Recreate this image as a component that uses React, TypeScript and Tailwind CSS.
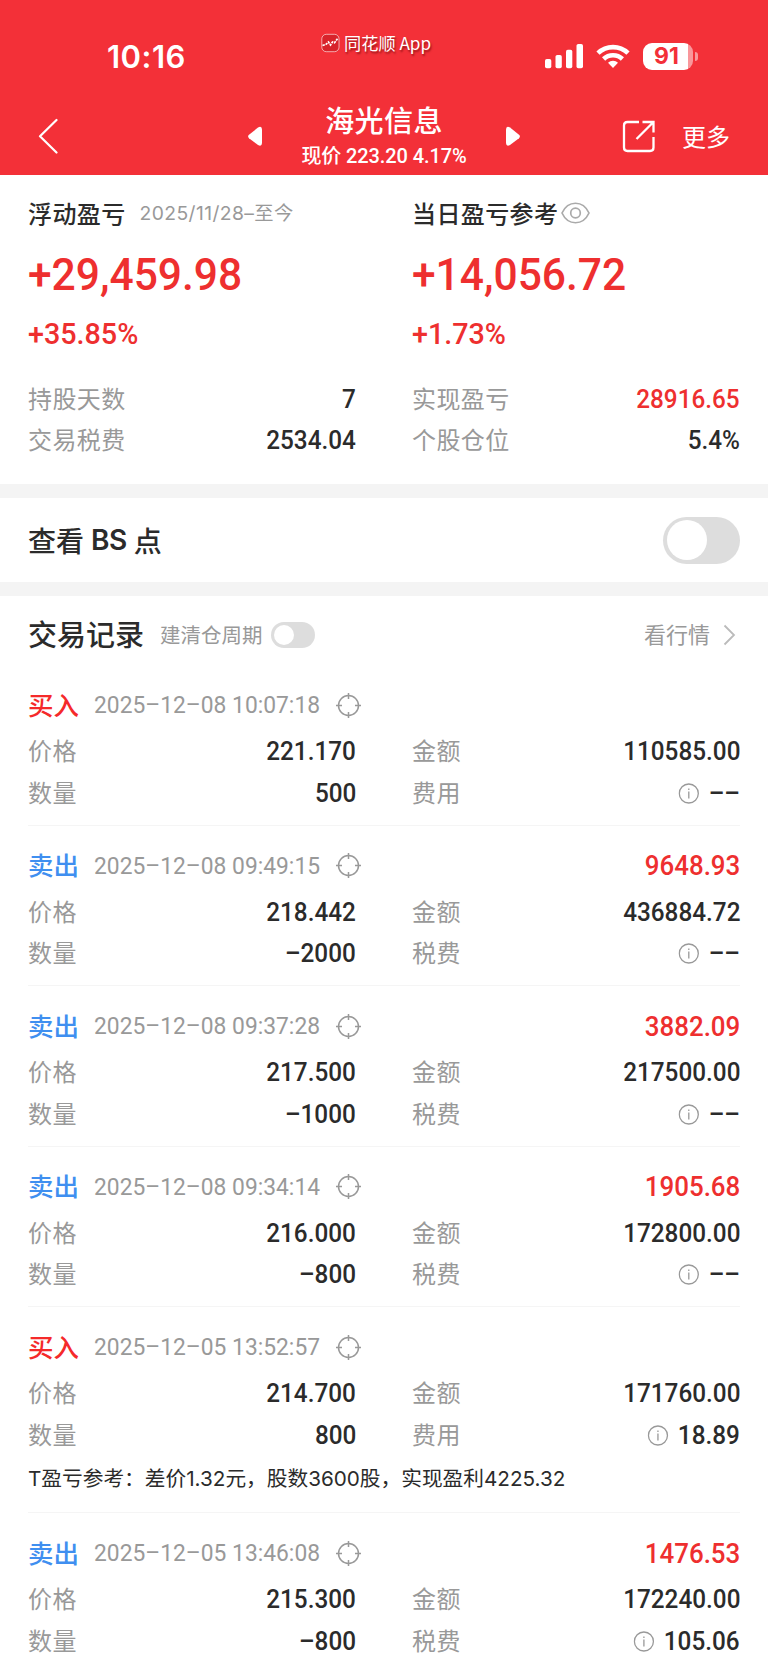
import { ReactNode } from "react";
import clsx from "clsx";

interface TradeRecord {
  side: "买入" | "卖出";
  time: string;
  profit?: string;
  price: string;
  amount: string;
  quantity: string;
  fee: string;
  note?: string;
}

const records: TradeRecord[] = [
  { side: "买入", time: "2025–12–08 10:07:18", price: "221.170", amount: "110585.00", quantity: "500", fee: "––" },
  { side: "卖出", time: "2025–12–08 09:49:15", profit: "9648.93", price: "218.442", amount: "436884.72", quantity: "–2000", fee: "––" },
  { side: "卖出", time: "2025–12–08 09:37:28", profit: "3882.09", price: "217.500", amount: "217500.00", quantity: "–1000", fee: "––" },
  { side: "卖出", time: "2025–12–08 09:34:14", profit: "1905.68", price: "216.000", amount: "172800.00", quantity: "–800", fee: "––" },
  {
    side: "买入",
    time: "2025–12–05 13:52:57",
    price: "214.700",
    amount: "171760.00",
    quantity: "800",
    fee: "18.89",
    note: "T盈亏参考：差价1.32元，股数3600股，实现盈利4225.32",
  },
  { side: "卖出", time: "2025–12–05 13:46:08", profit: "1476.53", price: "215.300", amount: "172240.00", quantity: "–800", fee: "105.06" },
];

function StatusBar() {
  return (
    <div className="flex h-[98px] items-start">
      <div className="ml-[107px] mt-[39px] w-[214px] font-['Inter'] text-[31px] font-semibold leading-[36px] tracking-[0.5px]">
        10:16
      </div>
      <div className="mt-[31px] flex w-[224px] items-center gap-[4px]">
        <svg width="19" height="20" viewBox="0 0 19 20" fill="none">
          <rect x="0.8" y="1.3" width="17.2" height="17.4" rx="4.5" fill="#d8232b" stroke="#fff" strokeOpacity="0.6" />
          <path d="M1.500 12.500l3.500-1.200L7.500 9l2 3 2-3 2 .8 3-4" stroke="#fff" strokeWidth="1.7" strokeDasharray="2.4 0.8" />
        </svg>
        <span className="text-[17.2px] leading-[24px] [text-shadow:1px_2px_2px_rgba(90,0,0,0.6)]">同花顺 App</span>
      </div>
      <svg className="mt-[43px]" width="39" height="26" viewBox="0 0 39 26" fill="#fff">
        <rect x="0" y="16" width="6.3" height="9.3" rx="1.8" />
        <rect x="10.5" y="12" width="6.3" height="13.3" rx="1.8" />
        <rect x="21" y="6.7" width="6.3" height="18.6" rx="1.8" />
        <rect x="31.5" y="1" width="6.5" height="24.3" rx="1.8" />
      </svg>
      <svg className="ml-[12px] mt-[43px]" width="34" height="26" viewBox="0 0 34 26" fill="none" stroke="#fff" strokeWidth="4.6">
        <path d="M2 10.2a21.5 21.5 0 0 1 30 0" />
        <path d="M7.6 16a13.5 13.5 0 0 1 18.8 0" />
        <path d="M17 25l-5-5.2a7.2 7.2 0 0 1 10 0z" fill="#fff" stroke="none" />
      </svg>
      <div className="ml-[13px] mt-[43px] flex h-[27px] items-center">
        <div className="flex h-[27px] w-[50px] rounded-[9px] bg-[linear-gradient(90deg,#fff_45px,#f9979b_45px)] pl-[11px] font-['Inter'] text-[23px] font-bold leading-[27px] text-[#f33038]">
          91
        </div>
        <div className="ml-[2px] h-[9px] w-[3px] rounded-r-full bg-[#f9979b]" />
      </div>
    </div>
  );
}

function NavBar() {
  return (
    <div className="flex h-[77px] items-start">
      <svg className="ml-[38px] mt-[20px]" width="21" height="36" viewBox="0 0 21 36" fill="none" stroke="#fff" strokeWidth="2.2" strokeLinecap="round" strokeLinejoin="round">
        <path d="M18.500 2L2 18.200 18.500 34.500" />
      </svg>
      <svg className="ml-[189px] mt-[28px]" width="15" height="21" viewBox="0 0 15 21" fill="#fff">
        <path d="M1 8.800L10 1.600Q13.800-.6 14 3.500V17Q13.800 21 10 19L1 12.200Q-.8 10.500 1 8.800Z" />
      </svg>
      <div className="flex w-[242px] flex-col items-center">
        <div className="mt-[3px] text-[29px] font-medium leading-[36px] tracking-[0.4px]">海光信息</div>
        <div className="mt-[6px] font-['Roboto','Noto_Sans_CJK_SC',sans-serif] text-[20px] font-medium leading-[26px] tracking-[-0.1px]">
          现价 223.20 4.17%
        </div>
      </div>
      <svg className="mt-[28px]" width="15" height="21" viewBox="0 0 15 21" fill="#fff">
        <path d="M14 8.800L5 1.600Q1.200-.6 1 3.500V17Q1.200 21 5 19L14 12.200Q15.800 10.500 14 8.800Z" />
      </svg>
      <svg className="ml-[102px] mt-[22px]" width="34" height="34" viewBox="0 0 34 34" fill="none" stroke="#fff" strokeWidth="2.3">
        <path d="M17 2H5.500Q2 2 2 5.500V27.500Q2 31 5.500 31H28Q31.500 31 31.500 27.500V17" />
        <path d="M20.500 2H31.500V12.500M31.500 2L14.500 19" />
      </svg>
      <div className="ml-[26px] mt-[21px] text-[24px] leading-[34px]">更多</div>
    </div>
  );
}

function Toggle({ small }: { small?: boolean }) {
  return (
    <div className={clsx("flex items-center rounded-full bg-[#ddd]", small ? "h-[26px] w-[44px] pl-[3px]" : "h-[47px] w-[77px] pl-[4px]")}>
      <div className={clsx("rounded-full bg-white", small ? "size-5" : "size-10")} />
    </div>
  );
}

function TargetIcon() {
  return (
    <svg width="25" height="25" viewBox="0 0 25 25" fill="none" stroke="#999" strokeWidth="1.5">
      <circle cx="12.500" cy="12.500" r="10" />
      <path d="M12.500 0V6M12.500 19V25M0 12.500H6M19 12.500H25" />
    </svg>
  );
}

// a little wider than tall, the value column is condensed horizontally
function InfoIcon() {
  return (
    <svg width="22.5" height="21" viewBox="0 0 21 21" preserveAspectRatio="none" fill="none" stroke="#999" strokeWidth="1.3">
      <circle cx="10.500" cy="10.500" r="9.500" />
      <path d="M10.500 8.500V15.500M10.500 5.500V7" />
    </svg>
  );
}

function Field({ label, children, red }: { label: string; children: ReactNode; red?: boolean }) {
  return (
    <div className="flex h-[41.5px] items-center justify-between">
      <span className="pb-[2px] text-[24px] tracking-[0.4px] text-[#999]">{label}</span>
      <span
        className={clsx(
          "flex origin-right scale-x-[0.935] items-center pt-px font-['Roboto'] text-[26px] font-medium",
          red ? "text-[#ee2f2f]" : "text-[#2b2b2b]"
        )}
      >
        {children}
      </span>
    </div>
  );
}

function Summary({ title, total, percent, children }: { title: ReactNode; total: string; percent: string; children: ReactNode }) {
  return (
    <div>
      <div className="flex h-[77px] items-center pb-[2px] text-[24px] font-medium tracking-[0.4px] text-[#2b2b2b]">{title}</div>
      <div className="h-[43px] origin-left scale-x-[0.945] font-['Roboto'] text-[45px] font-medium leading-[45px] text-[#ee2f2f]">{total}</div>
      <div className="mb-[6px] h-[77px] origin-left scale-x-[0.99] font-['Roboto'] text-[29px] font-medium leading-[79px] text-[#ee2f2f]">
        {percent}
      </div>
      {children}
    </div>
  );
}

function RecordItem({ record }: { record: TradeRecord }) {
  const isBuy = record.side === "买入";
  return (
    <div className="border-b border-[#f5f5f5] pb-[11px] pt-5">
      <div className="mb-[5.5px] flex h-10 items-center">
        <span className={clsx("pb-[2px] text-[25.5px] font-medium", isBuy ? "text-[#f52a2a]" : "text-[#3f8ff0]")}>{record.side}</span>
        <span className="ml-[15px] mr-[18px] w-[224px] origin-left scale-x-[0.95] whitespace-nowrap font-['Roboto'] text-[24px] text-[#999]">
          {record.time}
        </span>
        <TargetIcon />
        <span className="ml-auto origin-right scale-x-[0.925] pt-px font-['Roboto'] text-[28px] font-medium text-[#ee2f2f]">
          {record.profit}
        </span>
      </div>
      <div className="grid grid-cols-2 gap-x-14">
        <Field label="价格">{record.price}</Field>
        <Field label="金额">{record.amount}</Field>
        <Field label="数量">{record.quantity}</Field>
        <Field label={isBuy ? "费用" : "税费"}>
          <span className="mr-[10px]">
            <InfoIcon />
          </span>
          {record.fee}
        </Field>
      </div>
      {record.note && (
        <div className="h-[45.5px] font-['Inter','Noto_Sans_CJK_SC',sans-serif] text-[20.7px] leading-[45px] text-[#2b2b2b]">{record.note}</div>
      )}
    </div>
  );
}

export default function App() {
  return (
    <div className="h-[1669px] w-[768px] overflow-hidden bg-white font-['Noto_Sans_CJK_SC',sans-serif]">
      <header className="h-[175px] bg-[#f33038] text-white">
        <StatusBar />
        <NavBar />
      </header>

      <section className="grid h-[309px] grid-cols-2 gap-x-14 px-7">
        <Summary
          title={
            <>
              浮动盈亏
              <span className="ml-[14px] pt-px font-['Inter','Noto_Sans_CJK_SC',sans-serif] text-[19.3px] font-normal text-[#999]">2025/11/28–至今</span>
            </>
          }
          total="+29,459.98"
          percent="+35.85%"
        >
          <Field label="持股天数">7</Field>
          <Field label="交易税费">2534.04</Field>
        </Summary>
        <Summary
          title={
            <>
              当日盈亏参考
              <svg className="ml-[3px]" width="29" height="22" viewBox="0 0 29 22" fill="none" stroke="#aaa" strokeWidth="1.7">
                <path d="M1 11C7-2 22-2 28 11C22 24 7 24 1 11Z" />
                <circle cx="14.500" cy="11" r="4.800" />
              </svg>
            </>
          }
          total="+14,056.72"
          percent="+1.73%"
        >
          <Field label="实现盈亏" red>
            28916.65
          </Field>
          <Field label="个股仓位">5.4%</Field>
        </Summary>
      </section>

      <section className="flex h-[112px] items-center justify-between border-y-[14px] border-[#f4f4f4] px-7">
        <div className="flex items-center gap-[7px] text-[28px] font-medium text-[#2b2b2b]">
          <span>查看</span>
          <span className="font-['Inter'] font-semibold tracking-[-0.5px]">BS</span>
          <span>点</span>
        </div>
        <Toggle />
      </section>

      <section className="px-7">
        <div className="flex h-[69px] items-center pt-[9px]">
          <h2 className="pb-[2px] text-[29px] font-medium text-[#2b2b2b]">交易记录</h2>
          <span className="ml-[16px] mr-[8px] pb-px text-[20.5px] text-[#999]">建清仓周期</span>
          <Toggle small />
          <span className="ml-auto pb-[3px] text-[22px] text-[#999]">看行情</span>
          <svg className="ml-[13px] mr-[4px]" width="13" height="22" viewBox="0 0 13 22" fill="none" stroke="#bbb" strokeWidth="1.8">
            <path d="M1.500 1.500L11 11 1.500 20.500" />
          </svg>
        </div>
        {records.map((record) => (
          <RecordItem key={record.time} record={record} />
        ))}
      </section>
    </div>
  );
}
